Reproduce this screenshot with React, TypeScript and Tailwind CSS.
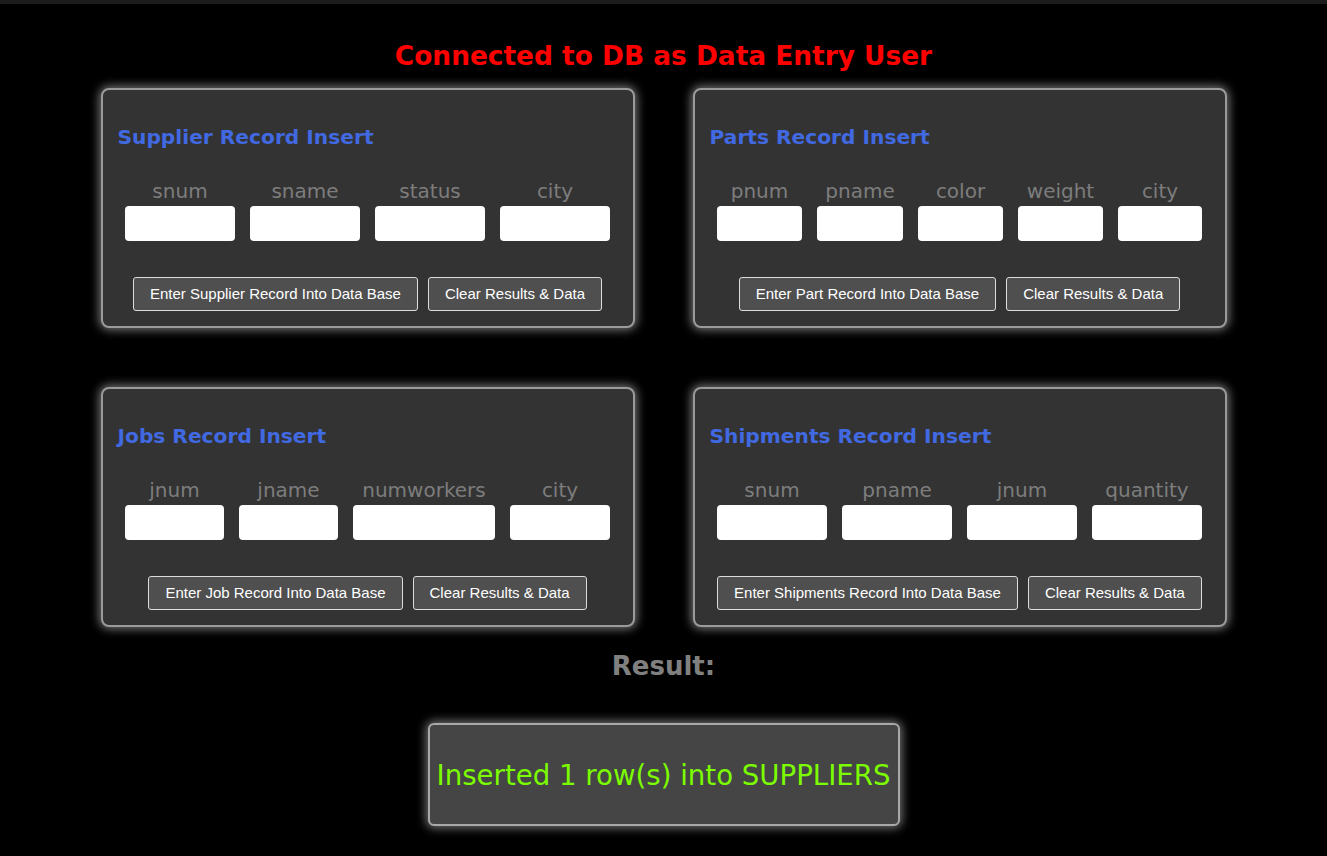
const verdana = { fontFamily: '"DejaVu Sans", Verdana, sans-serif' }

interface Field {
  label: string
  width: number
}

interface CardProps {
  title: string
  fields: Field[]
  enterLabel: string
}

function RecordCard({ title, fields, enterLabel }: CardProps) {
  return (
    <div className="w-[534px] h-[240px] rounded-[8px] border-2 border-[#9a9a9a] bg-[#333333] shadow-[0_0_10px_2px_rgba(255,255,255,0.45)] pt-[35px] pb-[15px] flex flex-col">
      <h2 className="pl-[15px] text-[20.2px] leading-[24px] font-bold text-[#4169e1]" style={verdana}>
        {title}
      </h2>
      <div className="mt-[30px] flex justify-center gap-[15px]">
        {fields.map((f) => (
          <div key={f.label} className="flex flex-col items-center" style={{ width: f.width }}>
            <label className="text-[20px] leading-[24px] text-[#7d7d7d] whitespace-nowrap" style={verdana}>
              {f.label}
            </label>
            <input className="mt-[3px] w-full h-[35px] rounded-[4px] bg-white border-0 outline-none" />
          </div>
        ))}
      </div>
      <div className="mt-[36px] flex justify-center gap-[10px]">
        <button className="h-[34px] px-[16px] rounded-[3px] border border-[#dcdcdc] bg-[#4f4f4f] text-white text-[15px] font-['Liberation_Sans',Arial,sans-serif]">
          {enterLabel}
        </button>
        <button className="h-[34px] px-[16px] rounded-[3px] border border-[#dcdcdc] bg-[#4f4f4f] text-white text-[15px] font-['Liberation_Sans',Arial,sans-serif]">
          Clear Results &amp; Data
        </button>
      </div>
    </div>
  )
}

export default function App() {
  return (
    <div className="min-h-screen bg-black">
      <div className="h-[4px] bg-[#1c1c1c]" />
      <h1 className="mt-[36px] text-center text-[26.4px] leading-[32px] font-bold text-[#ff0000]" style={verdana}>
        Connected to DB as Data Entry User
      </h1>
      <div className="mt-[16px] grid grid-cols-[534px_534px] justify-center gap-x-[58px] gap-y-[59px]">
        <RecordCard
          title="Supplier Record Insert"
          fields={[
            { label: 'snum', width: 110 },
            { label: 'sname', width: 110 },
            { label: 'status', width: 110 },
            { label: 'city', width: 110 },
          ]}
          enterLabel="Enter Supplier Record Into Data Base"
        />
        <RecordCard
          title="Parts Record Insert"
          fields={[
            { label: 'pnum', width: 85 },
            { label: 'pname', width: 86 },
            { label: 'color', width: 85 },
            { label: 'weight', width: 85 },
            { label: 'city', width: 84 },
          ]}
          enterLabel="Enter Part Record Into Data Base"
        />
        <RecordCard
          title="Jobs Record Insert"
          fields={[
            { label: 'jnum', width: 99 },
            { label: 'jname', width: 99 },
            { label: 'numworkers', width: 142 },
            { label: 'city', width: 100 },
          ]}
          enterLabel="Enter Job Record Into Data Base"
        />
        <RecordCard
          title="Shipments Record Insert"
          fields={[
            { label: 'snum', width: 110 },
            { label: 'pname', width: 110 },
            { label: 'jnum', width: 110 },
            { label: 'quantity', width: 110 },
          ]}
          enterLabel="Enter Shipments Record Into Data Base"
        />
      </div>
      <h2 className="mt-[23px] text-center text-[26px] leading-[32px] font-bold text-[#808080]" style={verdana}>
        Result:
      </h2>
      <div className="mt-[41px] mx-auto w-[472px] h-[103px] rounded-[6px] border-2 border-[#a8a8a8] bg-[#454545] shadow-[0_0_10px_2px_rgba(255,255,255,0.45)] flex items-center justify-center">
        <span className="mt-[3px] text-[27.6px] text-[#7cfc00] whitespace-nowrap" style={verdana}>
          Inserted 1 row(s) into SUPPLIERS
        </span>
      </div>
    </div>
  )
}
